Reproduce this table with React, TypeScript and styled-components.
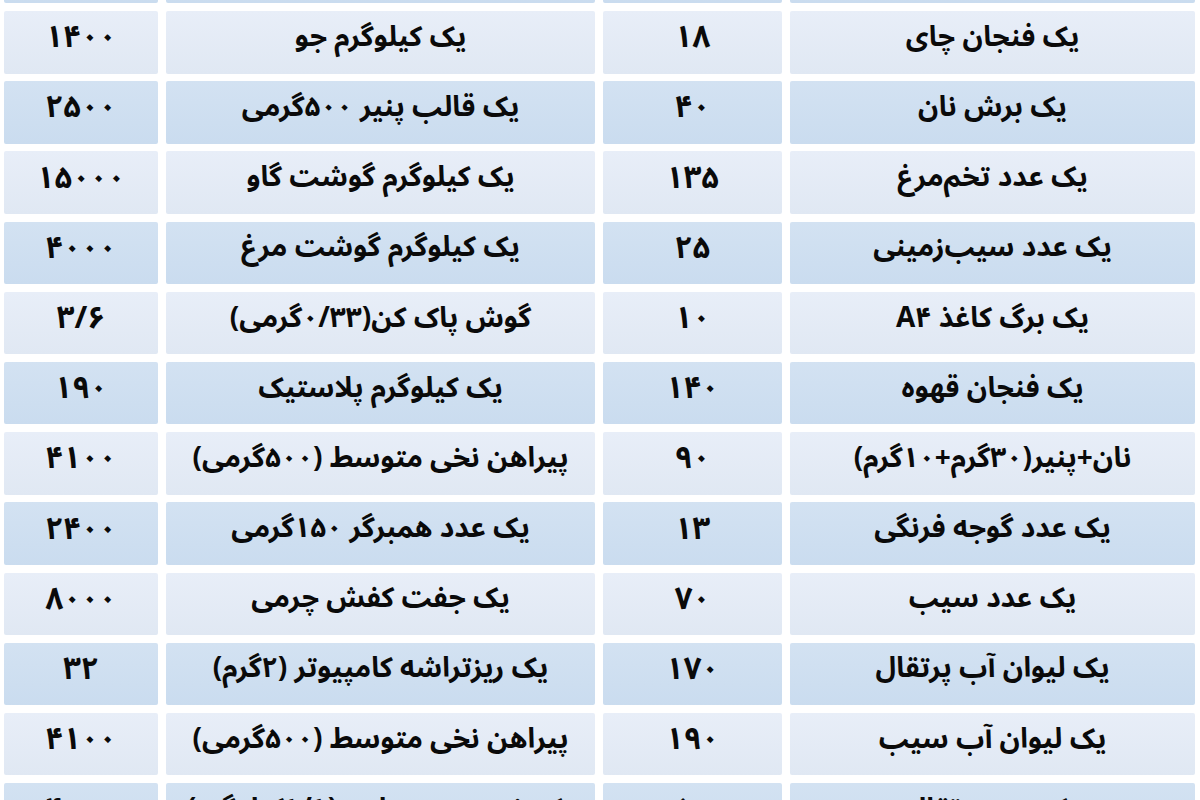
import React from "react";
import styled, { createGlobalStyle } from "styled-components";

const Global = createGlobalStyle`
  html, body { margin: 0; padding: 0; background: #ffffff; }
  body { width: 1200px; height: 800px; overflow: hidden; }
`;

const Page = styled.div`
  width: 1200px;
  height: 800px;
  overflow: hidden;
  background: #ffffff;
`;

const Table = styled.div`
  direction: rtl;
  display: grid;
  grid-template-columns: 405px 179px 429px 154px;
  grid-auto-rows: 62.5px;
  column-gap: 8px;
  row-gap: 7.7px;
  padding: 0 5px 0 4px;
  margin-top: -59.2px;
`;

const Cell = styled.div<{ $alt: boolean }>`
  display: flex;
  align-items: center;
  justify-content: center;
  padding-bottom: 10px;
  box-sizing: border-box;
  border-radius: 2px;
  background: ${(p) =>
    p.$alt
      ? "linear-gradient(#d3e2f2, #cadcef)"
      : "linear-gradient(#e8eef8, #e0e8f3)"};
  font-family: "Noto Sans Arabic", "DejaVu Sans", "Noto Sans", sans-serif;
  font-weight: bold;
  font-size: 28px;
  color: #0a0a0a;
  white-space: nowrap;
`;

const Num = styled.span`
  font-size: 31px;
  letter-spacing: 3px;
`;

type Row = [string, string, string, string];

const rows: Row[] = [
  ["", "", "", ""],
  ["یک فنجان چای", "۱۸", "یک کیلوگرم جو", "۱۴۰۰"],
  ["یک برش نان", "۴۰", "یک قالب پنیر ۵۰۰گرمی", "۲۵۰۰"],
  ["یک عدد تخم‌مرغ", "۱۳۵", "یک کیلوگرم گوشت گاو", "۱۵۰۰۰"],
  ["یک عدد سیب‌زمینی", "۲۵", "یک کیلوگرم گوشت مرغ", "۴۰۰۰"],
  ["یک برگ کاغذ A۴", "۱۰", "گوش پاک کن(۰/۳۳گرمی)", "۳/۶"],
  ["یک فنجان قهوه", "۱۴۰", "یک کیلوگرم پلاستیک", "۱۹۰"],
  ["نان+پنیر(۳۰گرم+۱۰گرم)", "۹۰", "پیراهن نخی متوسط (۵۰۰گرمی)", "۴۱۰۰"],
  ["یک عدد گوجه فرنگی", "۱۳", "یک عدد همبرگر ۱۵۰گرمی", "۲۴۰۰"],
  ["یک عدد سیب", "۷۰", "یک جفت کفش چرمی", "۸۰۰۰"],
  ["یک لیوان آب پرتقال", "۱۷۰", "یک ریزتراشه کامپیوتر (۲گرم)", "۳۲"],
  ["یک لیوان آب سیب", "۱۹۰", "پیراهن نخی متوسط (۵۰۰گرمی)", "۴۱۰۰"],
  ["یک عدد پرتقال", "۵۰", "یک خودروی سواری (۱/۱کیلوگرم)", "۴۰۰۰"],
];

export default function App() {
  return (
    <Page>
      <Global />
      <Table>
        {rows.map((r, i) => {
          const alt = i % 2 === 0;
          return (
            <React.Fragment key={i}>
              <Cell $alt={alt}>{r[0]}</Cell>
              <Cell $alt={alt}>
                <Num>{r[1]}</Num>
              </Cell>
              <Cell $alt={alt}>{r[2]}</Cell>
              <Cell $alt={alt}>
                <Num>{r[3]}</Num>
              </Cell>
            </React.Fragment>
          );
        })}
      </Table>
    </Page>
  );
}
